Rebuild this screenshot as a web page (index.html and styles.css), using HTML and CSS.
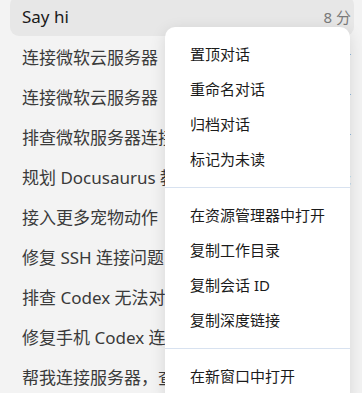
FILE: index.html
```html
<!DOCTYPE html>
<html lang="zh-CN">
<head>
  <meta charset="UTF-8">
  <title>Threads</title>
  <meta name="viewport" content="width=device-width, initial-scale=1.0">
  <link rel="stylesheet" href="styles.css">
</head>
<body>

  <ul class="threads">
    <li class="thread active"><span class="title">Say hi</span><span class="time">8 分</span></li>
    <li class="thread"><span class="title">连接微软云服务器</span><span class="time">2 小时</span></li>
    <li class="thread"><span class="title">连接微软云服务器</span><span class="time">3 小时</span></li>
    <li class="thread"><span class="title">排查微软服务器连接问题</span><span class="time">5 小时</span></li>
    <li class="thread"><span class="title">规划 Docusaurus 教程</span><span class="time">1 天</span></li>
    <li class="thread"><span class="title">接入更多宠物动作</span><span class="time">1 周</span></li>
    <li class="thread"><span class="title">修复 SSH 连接问题</span><span class="time">1 周</span></li>
    <li class="thread"><span class="title">排查 Codex 无法对话</span><span class="time">1 周</span></li>
    <li class="thread"><span class="title">修复手机 Codex 连接</span><span class="time">1 周</span></li>
    <li class="thread"><span class="title">帮我连接服务器，查看</span><span class="time">2 周</span></li>
  </ul>

  <div class="menu">
    <div class="item">置顶对话</div>
    <div class="item">重命名对话</div>
    <div class="item">归档对话</div>
    <div class="item">标记为未读</div>
    <div class="sep"></div>
    <div class="item">在资源管理器中打开</div>
    <div class="item">复制工作目录</div>
    <div class="item">复制会话 ID</div>
    <div class="item">复制深度链接</div>
    <div class="sep"></div>
    <div class="item">在新窗口中打开</div>
  </div>

</body>
</html>
```

FILE: styles.css
```css
body {
  margin: 0;
  padding: 0;
  background: #f3f3f3;
  font-family: "Noto Sans", "Noto Sans CJK SC", sans-serif;
  position: relative;
  height: 393px;
  overflow: hidden;
}

.threads {
  list-style: none;
  margin: -4px 0 0 0;
  padding: 0 8px 0 10px;
}

.thread {
  display: flex;
  align-items: center;
  height: 40px;
  padding: 0 3px 0 12px;
  border-radius: 9px;
  font-size: 17px;
  color: #3a3a3a;
  white-space: nowrap;
}

.thread .title {
  flex: 1;
  overflow: hidden;
}

.thread .time {
  font-size: 15px;
  color: #7a7a7a;
  margin-left: 10px;
}

.thread.active {
  background: #e7e7e7;
  color: #1a1a1a;
}

.menu {
  position: absolute;
  left: 165px;
  top: 27px;
  width: 185px;
  padding: 10px 0;
  background: #fff;
  border-radius: 10px;
  box-shadow: 0 4px 16px rgba(0, 0, 0, 0.12);
}

.item {
  height: 35px;
  line-height: 35px;
  padding-left: 25px;
  font-size: 15px;
  color: #1b1b1b;
}

.sep {
  height: 1px;
  margin: 10px 0;
  background: #d8e2f0;
}
```
